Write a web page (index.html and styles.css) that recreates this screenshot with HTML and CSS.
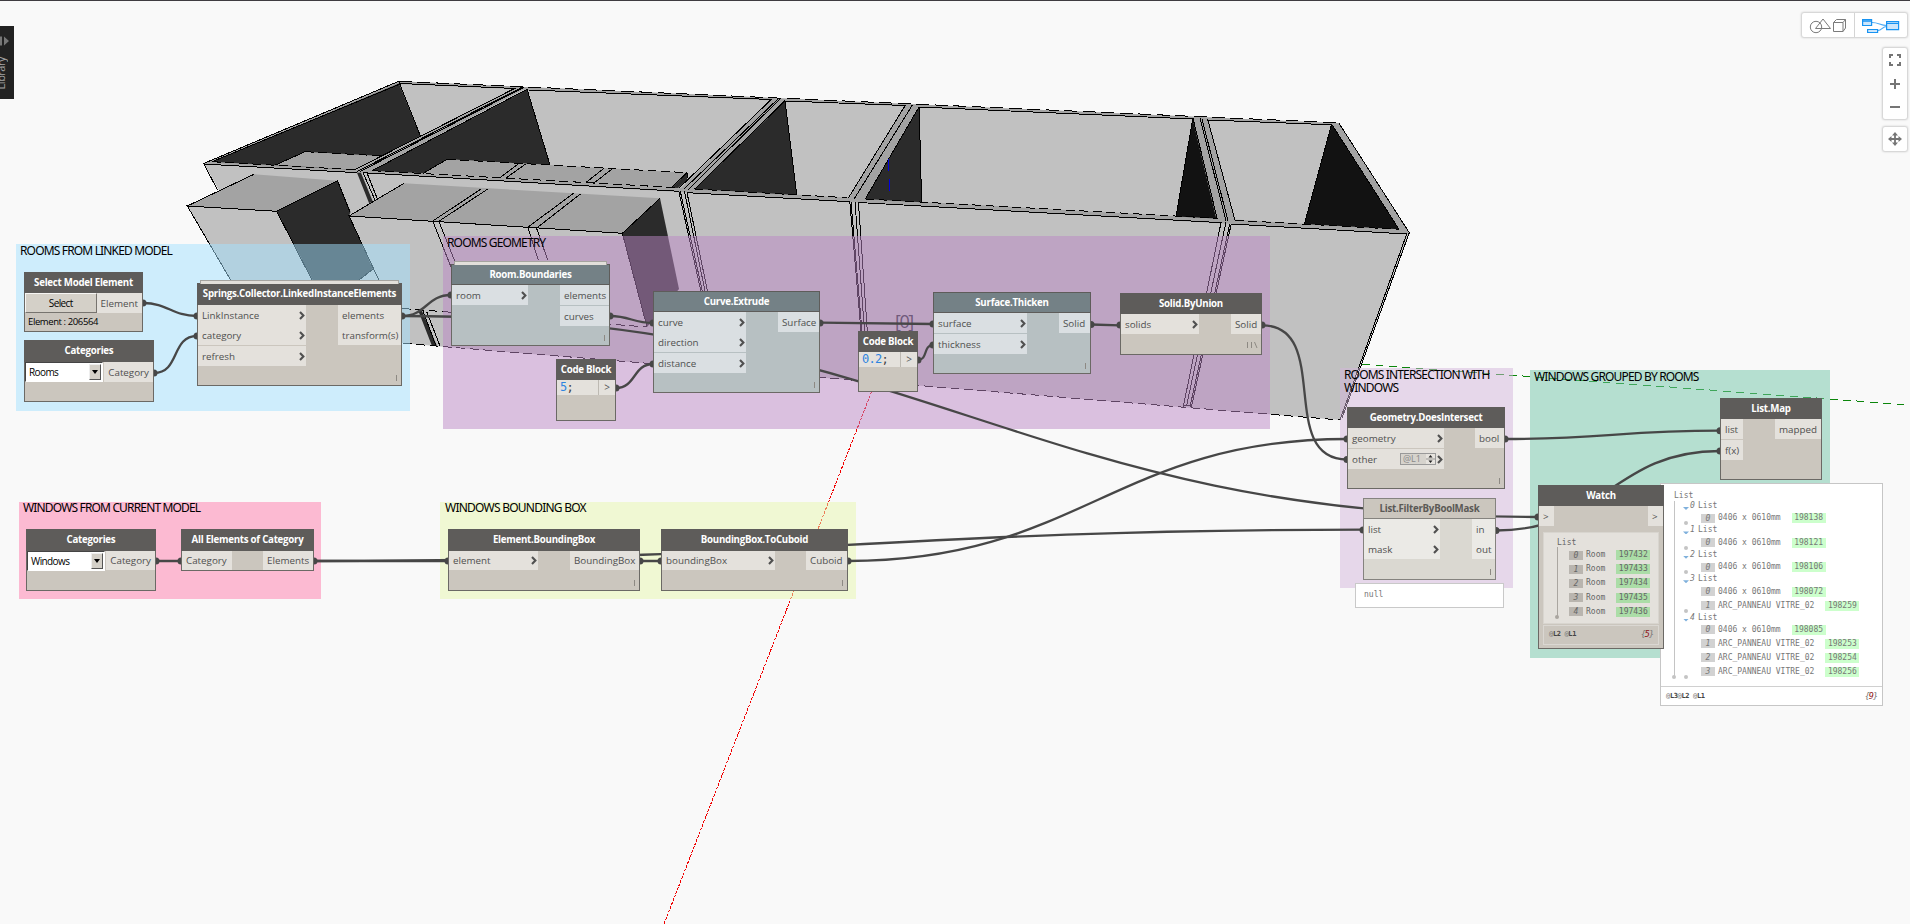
FILE: index.html
```html
<!DOCTYPE html>
<html lang="en">
<head>
<meta charset="utf-8">
<title>Dynamo workspace</title>
<link rel="stylesheet" href="styles.css">
</head>
<body>
<main class="workspace">
<svg class="defs" width="0" height="0"><defs><symbol id="chev" viewBox="0 0 6 9"><path d="M1 1L4.4 4.5L1 8" fill="none" stroke="#505050" stroke-width="2.1"/></symbol></defs></svg>

<svg class="scene" viewBox="0 0 1910 924">
  <path class="light" d="M203.7 163.5L398.8 81.3L1339 123.3L1409.3 232.7L1340 420L441 346.5L380 341L300 333Z"/>
  <g class="mid">
    <path d="M203.7 163.5L398.8 81.3L1339 123.3L1331 125L400 84L212 161.7L694 189L1217 218.5L1399 229.5L1331 124L1339 123L1409 232.7L1406 234L858 202.5L358 172.7Z"/>
    <path d="M515.5 87.5H527L372 171H354Z"/><path d="M771 99L785 100L695 190L679 190Z"/>
    <path d="M905 105L919 106L865 200L848 200Z"/><path d="M1193 118L1208 119L1235 222L1217 221Z"/>
  </g>
  <g class="dark">
    <path d="M399 83.5L420.4 136L354 169.7L212 161.7Z"/><path d="M527 89.5L550 165L447 159.3L423.3 173.3L372 170.7Z"/>
    <path d="M785 101L796.7 195L694.7 189Z"/><path d="M919.2 107L921.6 202.3L865.3 199Z"/>
  </g>
  <g class="black"><path d="M1192.7 119L1216.3 218.5L1176 216.5Z"/><path d="M1331.7 124.5L1399 229.3L1304.3 224Z"/></g>
  <g class="mid"><path d="M275.5 165L305 151.7L383.7 156L354 169.7Z"/><path d="M447 159.3L687 172.7L671.4 187.7L423.3 173.3Z"/></g>
  <path class="dark" d="M687 173V180L678 188L671.4 187.7Z"/>
  <path class="dark" d="M357 172.7H361L373 202L369 203ZM418 310L422 311L437 346L432 346Z"/>
  <g class="edge">
    <path d="M398.8 81.3L203.7 163.5L217.5 190M400 84L212 161.7M399 82L420.4 136M400 83.5L515.5 88.5M529 90L771.4 99.5M785 101L905 105.5M919 107L1193 119M1208 120L1331.7 124.8"/>
    <path d="M203.7 164L357 172.7M363 172.7L678.8 191.3M687 192.7L849.8 201.7M858.4 202.5L1221.6 222.7M1231 224L1406.7 234"/>
    <path d="M515.5 88L354 170M521.6 87.5L357 171.5M523.6 87.5L360 171.5M527 89.3L372 170.7M527 89L550 165"/>
    <path d="M771.4 99.3L678.8 188.3M777.6 99.3L683.7 189.3M779.6 99.3L687.8 190M785 100.7L694.7 189M785 101L796.7 195"/>
    <path d="M905.3 105.3L848.2 198.3M912.2 105.3L853.9 199.3M919.2 106.7L865.3 199M919.2 107L921.6 202"/>
    <path d="M1193 118.3L1217.3 219.3M1200 118.3L1226 220.7M1202 119L1228 221M1207.7 119.3L1235 220.3M1192.7 119L1176 216.7"/>
    <path d="M1331.7 124.3L1399 229.3M1339 123.3L1409.3 232.7L1342 418M1406.7 234L1340 420M1331.7 124L1304.3 224.3"/>
    <path d="M275.5 165L305 151.7M423.3 173.3L447 159.3M519 163.3L500 177.7M525.7 164L506 178M604 168.3L585.7 182.7M612 169L594 183M687 172.7L671 187.7M687 173V178"/>
    <path d="M363 172.7L375 200M367 173L377 198M426.7 311.7L440 346M423 311L436 346"/>
    <path d="M678.8 191.3L700.8 291M680.3 191.3L702.3 291M684.5 191.3L705 291M687 192.7L707.5 291M849.8 201.7L861 331M851 201.7L862 331M855 201.7L864.5 331M858.4 202L867.3 331"/>
    <path d="M1221 222.7L1183.3 406.7M1226 222L1186.7 405M1229.7 224L1190 406.7M1231.2 224L1191.5 406.7M1184 405H1191"/>
  </g>
  <path class="edge dash far" d="M398.8 81.3L1339 122.8"/>
  <path class="edge dash" d="M212 161.7L354 169.7M372 170.7L678 187.7M694.7 189L847 197.7M865.3 199L1217 218.3M1235 220.3L1399 229.3M305 151.7L384 156M447 159.3L687 172.7"/>
  <path class="edge dash" d="M403 343.3L1340 420M402 308.5L647 327"/>
  <g class="mid"><path d="M187.3 206L253.9 174.3L337.5 180.7L276.7 211.3Z"/><path d="M349 216L404 183.3L660 198.3L622.4 233.3Z"/></g>
  <path class="light" d="M187.3 206L276.7 211.3L313 281H231Z"/>
  <path class="dark" d="M276.7 211.3L337.5 180.7L350.5 212L349 216L373 268.7L359 280H312.5Z"/>
  <path class="dark" d="M622.4 233.3L660 198.3L679 289L647 327Z"/>
  <g class="edge">
    <path d="M230.6 280L187.3 206L276.7 211.3L312 280M187.3 206L253.9 174.3M276.7 211.3L337.5 180.7L350 212M359 280L373 269M378.8 280L349 216L622.4 233.3L647 327M349 216L404 183.3M622.4 233.3L660 198.3"/>
    <path d="M432.7 221L481.6 188.7M438.8 221.3L487.8 189M527.8 227.3L573.5 193.3M536.7 228L580.4 194M432.7 221L451 267M438.8 221.3L455.5 263M528 228L538.3 260M536.5 228L547.7 260"/>
  </g>
  <path d="M888.5 159V171M889.5 179V191" stroke="#0000e0" fill="none"/>
  <path class="axis" d="M1362 364L1910 405" stroke="#0b860b" stroke-dasharray="8 5.4"/>
  <path class="axis" d="M873 388L664 924" stroke="#f00000" stroke-dasharray="2.8 1.2"/>
</svg>

<section class="group g-linked">ROOMS FROM LINKED MODEL</section>
<section class="group g-geometry">ROOMS GEOMETRY</section>
<section class="group g-current">WINDOWS FROM CURRENT MODEL</section>
<section class="group g-bounding">WINDOWS BOUNDING BOX</section>
<section class="group g-intersect">ROOMS INTERSECTION WITH WINDOWS</section>
<section class="group g-grouped">WINDOWS GROUPED BY ROOMS</section>
<span class="origin-tag">[0]</span>

<svg class="wires" viewBox="0 0 1910 924">
  <g class="wire">
    <path d="M143 303C168 303 172 316 197 316"/><path d="M154 373C180 373 171 336 197 336"/>
    <path d="M402 316C426 316 427 295 451 295"/><path d="M402 316C921 316 1019 517 1538 517"/>
    <path d="M610 316C630 316 633 323 653 323"/><path d="M616 388C636 388 633 364 653 364"/>
    <path d="M820 322.7L933 324"/><path d="M918 360C928 360 923 345 933 345"/>
    <path d="M1091 324.5L1120 325.3"/><path d="M1262 325.3C1333 325.3 1276 459.5 1347 459.5"/>
    <path d="M156 561H181M314 561H448M640 561H661"/><path d="M314 561C786 561 891 529.7 1363 529.7"/>
    <path d="M848 561C1079 561 1116 439 1347 439"/><path d="M1505 439C1602 439 1623 430.7 1720 430.7"/>
    <path d="M1496 530.5C1603 530.5 1613 451 1720 451"/>
  </g>
  <g class="knob">
    <circle cx="143" cy="303" r="3.5"/><circle cx="197" cy="316" r="3.5"/><circle cx="154" cy="373" r="3.5"/><circle cx="197" cy="336" r="3.5"/>
    <circle cx="402" cy="316" r="3.5"/><circle cx="451" cy="295" r="3.5"/><circle cx="610" cy="316" r="3.5"/><circle cx="653" cy="323" r="3.5"/>
    <circle cx="616" cy="388" r="3.5"/><circle cx="653" cy="364" r="3.5"/><circle cx="820" cy="323" r="3.5"/><circle cx="933" cy="324" r="3.5"/>
    <circle cx="918" cy="360" r="3.5"/><circle cx="933" cy="345" r="3.5"/><circle cx="1091" cy="324.5" r="3.5"/><circle cx="1120" cy="325" r="3.5"/>
    <circle cx="1262" cy="325" r="3.5"/><circle cx="1347" cy="459.5" r="3.5"/><circle cx="156" cy="561" r="3.5"/><circle cx="181" cy="561" r="3.5"/>
    <circle cx="314" cy="561" r="3.5"/><circle cx="448" cy="561" r="3.5"/><circle cx="640" cy="561" r="3.5"/><circle cx="661" cy="561" r="3.5"/>
    <circle cx="848" cy="561" r="3.5"/><circle cx="1347" cy="439" r="3.5"/><circle cx="1505" cy="439" r="3.5"/><circle cx="1720" cy="430.7" r="3.5"/>
    <circle cx="1720" cy="451" r="3.5"/><circle cx="1363" cy="530" r="3.5"/><circle cx="1496" cy="530.5" r="3.5"/><circle cx="1538" cy="517" r="3.5"/>
  </g>
</svg>

<article class="node n-select"><h2>Select Model Element</h2>
  <div class="row"><button class="pick">Select</button><div class="port">Element</div></div><p class="picked">Element : 206564</p></article>
<article class="node n-cat1"><h2>Categories</h2>
  <div class="row"><div class="combo"><span>Rooms</span><b></b></div><div class="port">Category</div></div></article>
<article class="node stacked n-springs"><h2>Springs.Collector.LinkedInstanceElements</h2>
  <div class="row"><div class="ins"><div class="port">LinkInstance<svg><use href="#chev"/></svg></div><div class="port">category<svg><use href="#chev"/></svg></div><div class="port cut">refresh<svg><use href="#chev"/></svg></div></div>
  <div class="outs"><div class="port">elements</div><div class="port">transform(s)</div></div></div><i class="lace"></i></article>
<article class="node stacked shown n-bounds"><h2>Room.Boundaries</h2>
  <div class="row"><div class="ins"><div class="port">room<svg><use href="#chev"/></svg></div></div><div class="outs"><div class="port">elements</div><div class="port cut">curves</div></div></div><i class="lace"></i></article>
<article class="node n-code5"><h2>Code Block</h2><div class="row code"><code><em>5</em>;</code><span>&gt;</span></div></article>
<article class="node shown n-extrude"><h2>Curve.Extrude</h2>
  <div class="row"><div class="ins"><div class="port">curve<svg><use href="#chev"/></svg></div><div class="port">direction<svg><use href="#chev"/></svg></div><div class="port cut">distance<svg><use href="#chev"/></svg></div></div><div class="outs"><div class="port">Surface</div></div></div><i class="lace"></i></article>
<article class="node n-code02"><h2>Code Block</h2><div class="row code"><code><em>0.2</em>;</code><span>&gt;</span></div></article>
<article class="node shown n-thicken"><h2>Surface.Thicken</h2>
  <div class="row"><div class="ins"><div class="port">surface<svg><use href="#chev"/></svg></div><div class="port cut">thickness<svg><use href="#chev"/></svg></div></div><div class="outs"><div class="port">Solid</div></div></div><i class="lace"></i></article>
<article class="node n-union"><h2>Solid.ByUnion</h2>
  <div class="row"><div class="ins"><div class="port">solids<svg><use href="#chev"/></svg></div></div><div class="outs"><div class="port">Solid</div></div></div>
  <svg class="laces" viewBox="0 0 12 6"><path d="M1.5 0V6M5.5 0V6M8.5 0L11 6" stroke="#8d8983" fill="none"/></svg></article>
<article class="node n-cat2"><h2>Categories</h2>
  <div class="row"><div class="combo"><span>Windows</span><b></b></div><div class="port">Category</div></div></article>
<article class="node n-all"><h2>All Elements of Category</h2>
  <div class="row"><div class="ins"><div class="port">Category</div></div><div class="outs"><div class="port">Elements</div></div></div></article>
<article class="node n-bbox"><h2>Element.BoundingBox</h2>
  <div class="row"><div class="ins"><div class="port">element<svg><use href="#chev"/></svg></div></div><div class="outs"><div class="port">BoundingBox</div></div></div><i class="lace"></i></article>
<article class="node n-cuboid"><h2>BoundingBox.ToCuboid</h2>
  <div class="row"><div class="ins"><div class="port">boundingBox<svg><use href="#chev"/></svg></div></div><div class="outs"><div class="port">Cuboid</div></div></div><i class="lace"></i></article>
<article class="node n-intersect"><h2>Geometry.DoesIntersect</h2>
  <div class="row"><div class="ins"><div class="port">geometry<svg><use href="#chev"/></svg></div><div class="port cut">other<span class="level">@L1<svg class="spin" viewBox="0 0 9 10"><path d="M0 0H9V10H0Z" fill="#e6e3de"/><path d="M0 5H9" stroke="#777" stroke-width=".7"/><path d="M2.5 3.5L4.5 1L6.5 3.5ZM2.5 6.5L4.5 9L6.5 6.5Z" fill="#222"/></svg></span><svg><use href="#chev"/></svg></div></div><div class="outs"><div class="port">bool</div></div></div><i class="lace"></i></article>
<article class="node idle n-filter"><h2>List.FilterByBoolMask</h2>
  <div class="row"><div class="ins"><div class="port">list<svg><use href="#chev"/></svg></div><div class="port">mask<svg><use href="#chev"/></svg></div></div><div class="outs"><div class="port">in</div><div class="port">out</div></div></div><i class="lace"></i></article>
<div class="null-tip">null</div>
<article class="node n-map"><h2>List.Map</h2>
  <div class="row"><div class="ins"><div class="port">list</div><div class="port cut">f(x)</div></div><div class="outs"><div class="port">mapped</div></div></div></article>

<aside class="preview">
  <div class="tree">
    <div class="root">List</div>
    <div class="branch"><div class="head"><em>0</em>List</div><div class="item"><i>0</i>0406 x 0610mm<b>198138</b></div></div>
    <div class="branch"><div class="head"><em>1</em>List</div><div class="item"><i>0</i>0406 x 0610mm<b>198121</b></div></div>
    <div class="branch"><div class="head"><em>2</em>List</div><div class="item"><i>0</i>0406 x 0610mm<b>198106</b></div></div>
    <div class="branch"><div class="head"><em>3</em>List</div><div class="item"><i>0</i>0406 x 0610mm<b>198072</b></div><div class="item"><i>1</i>ARC_PANNEAU VITRE_02<b>198259</b></div></div>
    <div class="branch"><div class="head"><em>4</em>List</div><div class="item"><i>0</i>0406 x 0610mm<b>198085</b></div><div class="item"><i>1</i>ARC_PANNEAU VITRE_02<b>198253</b></div><div class="item"><i>2</i>ARC_PANNEAU VITRE_02<b>198254</b></div><div class="item"><i>3</i>ARC_PANNEAU VITRE_02<b>198256</b></div></div>
  </div>
  <footer><span>@<b>L3</b>@<b>L2</b> @<b>L1</b></span><em>{<b>9</b>}</em></footer>
</aside>

<article class="node n-watch"><h2>Watch</h2>
  <div class="row"><div class="port">&gt;</div><div class="port">&gt;</div></div>
  <div class="watch-list"><div class="root">List</div>
    <div class="item"><i>0</i>Room<b>197432</b></div><div class="item"><i>1</i>Room<b>197433</b></div><div class="item"><i>2</i>Room<b>197434</b></div><div class="item"><i>3</i>Room<b>197435</b></div><div class="item"><i>4</i>Room<b>197436</b></div></div>
  <footer><span>@<b>L2</b> @<b>L1</b></span><em>{<b>5</b>}</em></footer></article>

<aside class="library"><svg viewBox="0 0 10 12"><path d="M0 1.5H2V10.5H0ZM4 1.5L9 6L4 10.5Z" fill="#777"/></svg><span>Library</span></aside>

<nav class="modes">
  <button><svg width="38" height="16" viewBox="0 0 38 16" fill="none" stroke="#7b7b7b"><circle cx="7" cy="9" r="5.7"/><path d="M6.500 10.500L14 1L21.500 10.500Z"/><path d="M24.500 4.500H34V13.500H24.500ZM24.500 4.500L27.500 1.500H36.500L34 4.500M36.500 1.500V10L34 13.500"/></svg></button>
  <button><svg width="38" height="16" viewBox="0 0 38 16" fill="#cde6fb" stroke="#1793f2" stroke-width="1.200"><path d="M10 4.500C17 4.500 18 7.500 25 7.500M16 12.500C20 12.500 20 8.500 25 8.500" fill="none" stroke="#4aa9f4"/><path d="M.6 1.600H9.600V7.500H.6ZM.6 3.200H9.600M5.600 11.500H15.600V14.500H5.600ZM24.600 3.600H36.600V11.600H24.600ZM24.600 5.500H36.600"/></svg></button>
</nav>
<nav class="zoomer">
  <svg viewBox="0 0 12 12"><path d="M1 4V1H4M8 1H11V4M11 8V11H8M4 11H1V8"/></svg>
  <svg viewBox="0 0 12 12"><path d="M6 1V11M1 6H11"/></svg>
  <svg viewBox="0 0 12 12"><path d="M1 6H11"/></svg>
</nav>
<nav class="panner"><svg viewBox="0 0 14 14"><path d="M7 2V12M2 7H12" stroke="#757575" stroke-width="1.800"/><path d="M7 0L10 3.500H4ZM7 14L10 10.500H4ZM0 7L3.500 4V10ZM14 7L10.500 4V10Z" fill="#757575"/></svg></nav>
</main>
</body>
</html>
```
FILE: styles.css
```css
* { box-sizing: border-box; }
body { margin: 0; overflow: hidden; background: #f9f9f9; }
.workspace { position: relative; width: 1910px; height: 924px; overflow: hidden; border-top: 1px solid #3f3c41; font-family: "Open Sans", "Noto Sans", sans-serif; }
.workspace > * { margin-top: -1px; }
.defs { position: absolute; }
.scene, .wires { position: absolute; left: 0; top: 0; width: 1910px; height: 924px; }
.light { fill: #c1c1c1; }
.mid { fill: #a3a3a3; }
.dark { fill: #2b2b2b; }
.black { fill: #121212; }
.edge { fill: none; stroke: #000; stroke-width: 1; shape-rendering: crispEdges; }
.dash { stroke-dasharray: 8.8 4.6; }
.dash.far { stroke-dasharray: 13 5.500; }
.axis { fill: none; stroke-width: 1; shape-rendering: crispEdges; }
.wire { fill: none; stroke: #474747; stroke-width: 2.3; }
.knob { fill: #474747; }

.group { position: absolute; isolation: isolate; padding: 0 4px; font: 12px/13px "Noto Sans", sans-serif; letter-spacing: -.84px; color: #000; }
.group::before { content: ""; position: absolute; inset: 0; z-index: -1; opacity: .5; background: var(--tint); }
.g-linked { left: 16px; top: 244px; width: 394px; height: 167px; --tint: #a4e1ff; }
.g-geometry { left: 443px; top: 236px; width: 827px; height: 193px; --tint: #bb87c6; }
.g-current { left: 19px; top: 502px; width: 302px; height: 97px; --tint: #ff7bac; }
.g-bounding { left: 440px; top: 502px; width: 416px; height: 97px; --tint: #e8f7ad; }
.group.g-current, .group.g-bounding { line-height: 11px; padding-left: 5px; letter-spacing: -.76px; }
.group.g-current { padding-left: 4px; letter-spacing: -.84px; }
.g-intersect { left: 1340px; top: 368px; width: 173px; height: 220px; --tint: #d4b6db; }
.g-grouped { left: 1530px; top: 370px; width: 300px; height: 288px; --tint: #71c6a8; }
.origin-tag { position: absolute; left: 895px; top: 311px; font-size: 18px; line-height: 20px; letter-spacing: -1.500px; color: #715a7c; }

.node { --body: #cbc6be; --port: #e4e1dc; --bar: #5e5c5a; position: absolute; display: flex; flex-direction: column; background: var(--body); border: 1px solid #6b6965; }
.shown { --body: #b7c0c2; --port: #dadfe2; --bar: #748186; }
.idle { --body: #dad8d1; --port: #ebeae6; --bar: #cbc6be; border-color: #85837f; }
.node h2 { flex: none; height: 21px; margin: -1px -1px 0; border: 1px solid #5e5c5a; background: var(--bar); color: #fff; font-size: 9.700px; line-height: 19px; font-weight: 700; letter-spacing: -.25px; text-align: center; white-space: nowrap; }
.idle h2 { color: #5b5956; border-color: #85837f; }
.row { display: flex; justify-content: space-between; }
.ins { width: var(--in); }
.outs { width: var(--out); }
.port { display: flex; align-items: center; justify-content: space-between; height: 20px; padding: 0 4px; background: var(--port); color: #4f4f4f; font-size: 9.800px; white-space: nowrap; }
.port.cut { height: 21px; border-top: 1px solid var(--body); }
.port svg { width: 6px; height: 9px; margin-right: -3px; }
.outs .port { justify-content: flex-start; }
.lace { width: 1px; height: 6px; margin: auto 4px 4px auto; background: #8d8983; }
.laces { width: 12px; height: 6px; margin: auto 3px 6px auto; }
.stacked::before { content: ""; position: absolute; left: 2px; right: 2px; top: -4px; height: 3px; background: #e2dfda; border: 1px solid #a5a39f; border-bottom: 0; }

.n-select { left: 24px; top: 272px; width: 119px; height: 60px; }
.n-cat1 { left: 24px; top: 340px; width: 130px; height: 62px; }
.n-springs { left: 197px; top: 283px; width: 205px; height: 103px; --in: 108px; --out: 63px; }
.n-bounds { left: 451px; top: 264px; width: 159px; height: 82px; --in: 76px; --out: 49px; }
.n-code5 { left: 556px; top: 359px; width: 60px; height: 62px; }
.n-extrude { left: 653px; top: 291px; width: 167px; height: 102px; --in: 92px; --out: 41px; }
.n-code02 { left: 858px; top: 331px; width: 60px; height: 61px; }
.n-thicken { left: 933px; top: 292px; width: 158px; height: 82px; --in: 93px; --out: 31px; }
.n-union { left: 1120px; top: 293px; width: 142px; height: 62px; --in: 78px; --out: 30px; }
.n-cat2 { left: 26px; top: 529px; width: 130px; height: 62px; }
.n-all { left: 181px; top: 529px; width: 133px; height: 42px; --in: 50px; --out: 50px; }
.n-bbox { left: 448px; top: 529px; width: 192px; height: 62px; --in: 89px; --out: 69px; }
.n-cuboid { left: 661px; top: 529px; width: 187px; height: 62px; --in: 113px; --out: 41px; }
.n-intersect { left: 1347px; top: 407px; width: 158px; height: 82px; --in: 96px; --out: 29px; }
.n-filter { left: 1363px; top: 498px; width: 133px; height: 82px; --in: 76px; --out: 23px; }
.n-map { left: 1720px; top: 398px; width: 102px; height: 82px; --in: 22px; --out: 46px; }
.n-watch { left: 1538px; top: 485px; width: 126px; height: 164px; }
.n-springs h2, .n-cat1 h2, .n-cat2 h2, .n-all h2, .n-bbox h2, .n-cuboid h2 { height: 22px; }
.n-all .port, .n-bbox .port, .n-cuboid .port, .n-cat2 .port { height: 19px; }

.n-select .port, .n-cat1 .port, .n-cat2 .port { flex: none; }
.pick { width: 73px; height: 20px; padding: 0; border: 1px solid; border-color: #f6f5f3 #77746f #77746f #f6f5f3; background: #d4d0c8; font: 10px "Open Sans", sans-serif; letter-spacing: -.6px; color: #000; }
.picked { margin: 1px 3px 0; font-size: 9.500px; line-height: 15px; letter-spacing: -.4px; color: #000; }
.combo { display: flex; width: 78px; height: 20px; padding: 1px; background: #fff; border: 1px solid; border-color: #444 #fff #fff #444; font-size: 10px; line-height: 16px; letter-spacing: -.6px; }
.combo span { flex: 1; padding-left: 2px; }
.combo b { display: grid; place-items: center; width: 12px; background: #d4d0c8; border: 1px solid; border-color: #eee #555 #555 #eee; }
.combo b::before { content: ""; border: 3px solid transparent; border-top: 4px solid #000; border-bottom: 0; }
.code { height: 15px; background: var(--port); }
.code code { font: 12px/14px "DejaVu Sans Mono", monospace; letter-spacing: -.7px; padding-left: 3px; color: #444; }
.code em { font-style: normal; color: #2d84e0; }
.code span { width: 17px; border-left: 1px solid #bdb9b2; font-size: 10px; line-height: 14px; text-align: center; color: #555; }
.level { display: flex; justify-content: space-between; width: 36px; height: 12px; margin-left: auto; margin-right: 1px; border: 1px solid #999; background: #d6d3cd; color: #888; font-size: 9px; line-height: 10px; padding-left: 2px; }
.port .spin { width: 9px; height: 10px; margin: 0; }
.null-tip { position: absolute; left: 1355px; top: 583px; width: 149px; height: 25px; border: 1px solid #c9c9c9; background: #fff; padding-left: 8px; font: 8px/21px "DejaVu Sans Mono", monospace; color: #777; }

.preview { position: absolute; left: 1660px; top: 483px; width: 223px; height: 223px; background: #fff; border: 1px solid #c6c6c6; font: 8px/10px "DejaVu Sans Mono", monospace; color: #777; }
.tree { position: relative; height: 203px; padding: 7px 0 0 13px; border-bottom: 1px solid #d0d0d0; }
.tree::before { content: ""; position: absolute; left: 13px; top: 17px; width: 1px; height: 176px; background: #c4c4c4; }
.tree::after { content: ""; position: absolute; left: 11px; top: 191px; width: 4px; height: 4px; border-radius: 50%; background: #c4c4c4; }
.branch { position: relative; padding-left: 9px; }
.branch::after { content: ""; position: absolute; left: 10px; bottom: 0; width: 4px; height: 4px; border-radius: 50%; background: #c4c4c4; }
.head { display: flex; height: 10.400px; }
.head::before { content: ""; width: 6px; height: 3px; margin: 6px 1px 0 0; background: #7fb0dc; clip-path: polygon(0 0, 100% 0, 50% 100%); }
.head em { width: 8px; }
.item { display: flex; align-items: center; height: 14px; padding-left: 18px; }
.item i { width: 14px; height: 9px; margin-right: 3px; background: #d2d2d2; line-height: 9px; text-align: center; }
.item b { width: 34px; height: 10px; margin-left: 11px; background: #ccffcc; font-weight: 400; line-height: 10px; text-align: center; }
.preview footer, .n-watch footer { display: flex; justify-content: space-between; align-items: center; font: 7px "DejaVu Sans Mono", monospace; letter-spacing: -.35px; color: #777; }
footer em { font-size: 8.500px; letter-spacing: -1px; }
footer em b { font-weight: 400; color: #8c1010; }
footer span b { color: #444; }
.preview footer { height: 18px; padding: 0 5px; }
.n-watch .row .port { width: 15px; height: 20px; }
.watch-list { position: relative; margin: 6px 4px 0; height: 92px; padding: 5px 0 0 13px; background: var(--port); border: 1px solid #d8d5cf; font: 8px/10px "DejaVu Sans Mono", monospace; color: #666; }
.watch-list::before { content: ""; position: absolute; left: 13px; top: 14px; width: 1px; height: 70px; background: #aaa6a0; }
.watch-list::after { content: ""; position: absolute; left: 11px; top: 82px; width: 4px; height: 4px; border-radius: 50%; background: #aaa6a0; }
.watch-list .item { height: 14.200px; padding-left: 12px; }
.watch-list .item i { background: #b9b5af; }
.watch-list .item b { background: #abdda7; margin-left: 11px; }
.n-watch footer { margin: 1px 4px 0; height: 20px; border: 1px solid #dad7d2; padding: 0 5px 2px; }

.library { position: absolute; left: 0; top: 26px; width: 14px; height: 73px; background: #222; overflow: hidden; }
.library svg { position: absolute; left: 0; top: 9px; width: 10px; height: 12px; }
.library span { position: absolute; left: -7px; bottom: 10px; writing-mode: vertical-rl; transform: rotate(180deg); font-size: 11px; line-height: 16px; color: #a2a2a2; letter-spacing: -.5px; }
.modes { position: absolute; left: 1802px; top: 13px; width: 105px; height: 24px; display: flex; background: #fff; border-radius: 2px; box-shadow: 0 0 2px 1px #ccc; }
.modes button { flex: 1; padding: 2px 0 0; border: 0; background: none; line-height: 0; }
.modes button + button { border-left: 1px solid #d4d4d4; }
.zoomer, .panner { position: absolute; left: 1883px; width: 24px; background: #fff; border-radius: 2px; box-shadow: 0 0 2px 1px #ccc; display: flex; flex-direction: column; align-items: center; }
.zoomer { top: 48px; height: 71px; padding-top: 6px; gap: 11.500px; }
.zoomer svg { width: 12px; height: 12px; fill: none; stroke: #757575; stroke-width: 2; }
.panner { top: 127px; height: 24px; justify-content: center; }
.panner svg { width: 14px; height: 14px; }
```
